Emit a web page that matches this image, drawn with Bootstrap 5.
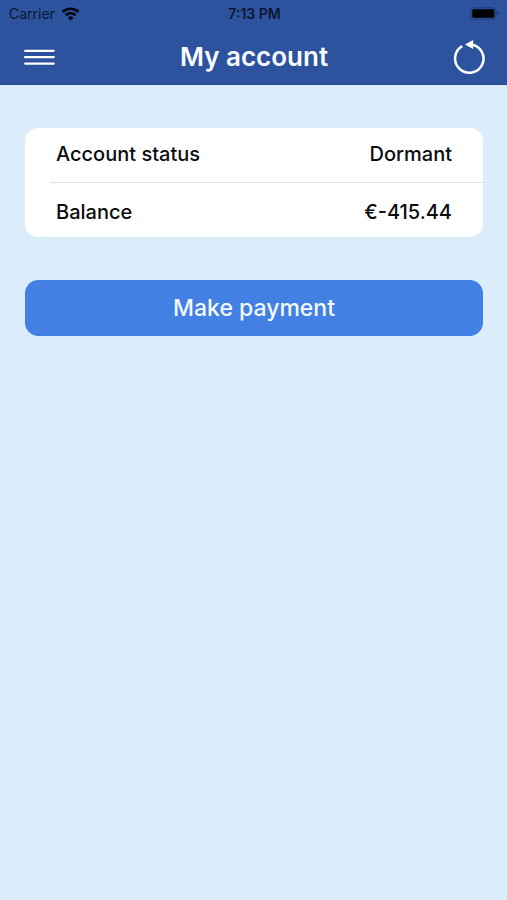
<!DOCTYPE html>
<html lang="en">
<head>
<meta charset="utf-8">
<meta name="viewport" content="width=device-width, initial-scale=1">
<title>My account</title>
<link href="https://cdn.jsdelivr.net/npm/bootstrap@5.3.0/dist/css/bootstrap.min.css" rel="stylesheet">
<style>
body { background: #dbedfb; color: #0c0c0e; font-family: Inter, "Liberation Sans", sans-serif; }
.app-header { background: #2d539f; border-bottom: 1px solid #2a4a8c; }
.status-bar { height: 28px; padding: 0 7px 0 9px; font-size: 14px; line-height: 28px; color: #0b1630; }
.status-time { font-weight: 600; }
.title-bar { padding: 1px 20px 0 21px; }
.title-bar h1 { padding-top: 1px; font-size: 26px; line-height: 54px; font-weight: 600; color: #f8fbff; }
.icon-btn { line-height: 0; }
.side { flex: 1 1 0; }
.page { padding: 43px 24px 0 25px; }
.account-list { border-radius: 13px; background: #fff; font-size: 20px; line-height: 26px; font-weight: 500; }
.account-row { padding: 13px 31px 15px; }
.account-line + .account-row { padding: 16px 31px 12px; }
.account-line { margin-left: 25px; height: 1px; background: #e0e1e3; }
.btn-pay { --bs-btn-color: #f4f9ff; --bs-btn-bg: #4380e3; --bs-btn-border-color: #4380e3; --bs-btn-hover-color: #fff; --bs-btn-hover-bg: #386fce; --bs-btn-hover-border-color: #386fce; margin-top: 43px; padding: 11px 16px; border-radius: 13px; font-size: 23px; line-height: 32px; font-weight: 500; }
</style>
</head>
<body>
<header class="app-header">
  <div class="status-bar d-flex align-items-center">
    <div class="side d-flex align-items-center gap-1">
      <span>Carrier</span>
      <svg width="22" height="16" viewBox="0 0 22 16" fill="none" stroke="#000714" stroke-width="2.6" aria-label="Wi-Fi">
        <path d="M3.6 6a11.6 11.6 0 0 1 16 0"/>
        <path d="M6.7 9.2a7.1 7.1 0 0 1 9.8 0"/>
        <path d="M11.6 14.6 8.8 11.7a4 4 0 0 1 5.6 0Z" fill="#000714" stroke="none"/>
      </svg>
    </div>
    <span class="status-time">7:13 PM</span>
    <div class="side d-flex justify-content-end">
      <svg width="30" height="14" viewBox="0 0 30 14" aria-label="Battery">
        <rect x=".8" y=".8" width="25" height="11.4" rx="3" fill="none" stroke="#1d3a78"/>
        <rect x="2.3" y="2.3" width="22" height="8.4" rx="1.5" fill="#000"/>
        <path d="M27.3 4.3q2 .6 2 2.2t-2 2.2Z" fill="#1d3a78"/>
      </svg>
    </div>
  </div>
  <nav class="title-bar d-flex align-items-center" aria-label="Main">
    <div class="side">
      <button type="button" class="icon-btn btn p-0 border-0" aria-label="Menu">
        <svg width="36" height="36" viewBox="0 0 36 36" stroke="#fff" stroke-width="2.2" stroke-linecap="round"><path d="M4.1 11.8h28.6M4.1 18.2h28.6M4.1 24.6h28.6"/></svg>
      </button>
    </div>
    <h1 class="mb-0">My account</h1>
    <div class="side text-end">
      <button type="button" class="icon-btn btn p-0 border-0" aria-label="Refresh">
        <svg width="34" height="36" viewBox="0 0 34 36"><path d="M9.2 7.2A14.2 14.2 0 1 0 18 5.4L16 5.2" fill="none" stroke="#fff" stroke-width="2.5"/><path d="M12 5.4 20.1 1.1V10Z" fill="#fff"/></svg>
      </button>
    </div>
  </nav>
</header>
<main class="page">
  <div class="account-list overflow-hidden">
    <div class="account-row d-flex justify-content-between"><span>Account status</span><span>Dormant</span></div>
    <div class="account-line"></div>
    <div class="account-row d-flex justify-content-between"><span>Balance</span><span>€-415.44</span></div>
  </div>
  <button type="button" class="btn btn-pay w-100">Make payment</button>
</main>
<script src="https://cdn.jsdelivr.net/npm/bootstrap@5.3.0/dist/js/bootstrap.bundle.min.js"></script>
</body>
</html>
